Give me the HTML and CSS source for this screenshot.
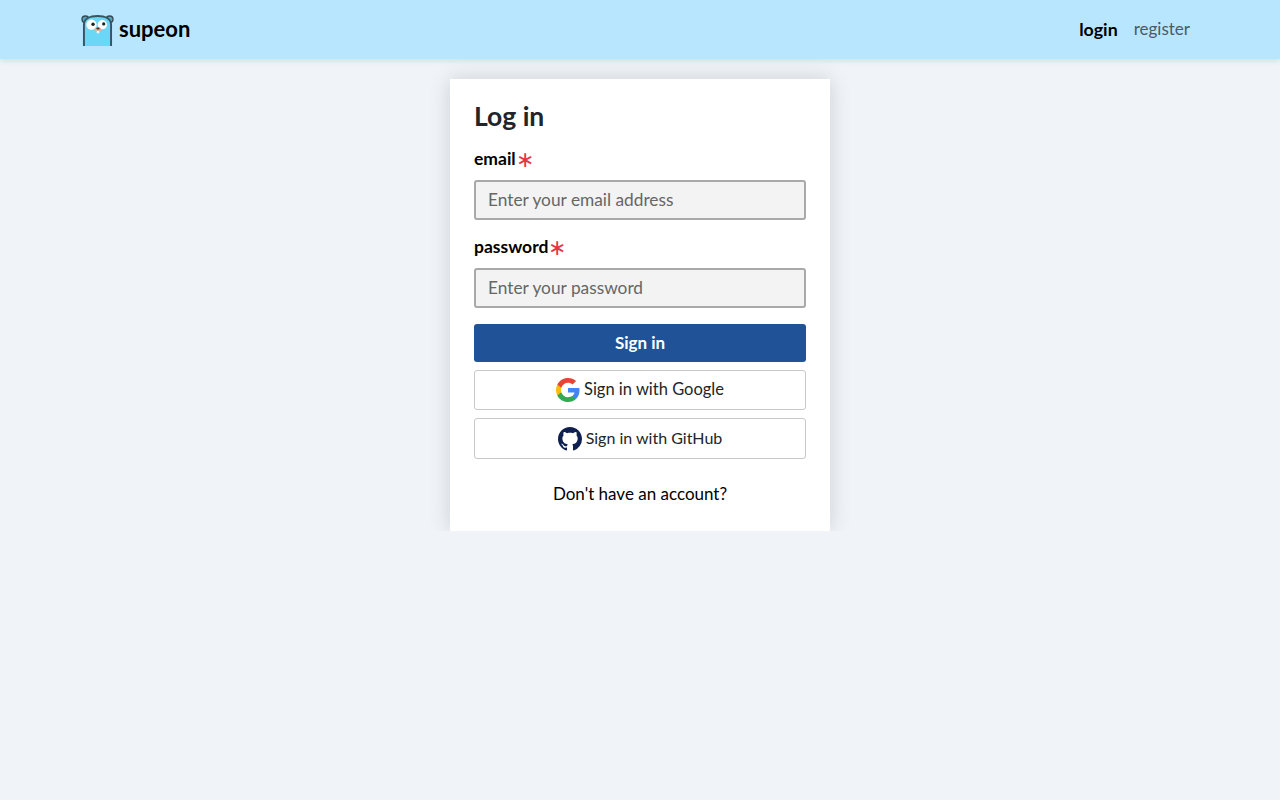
FILE: index.html
```html
<!DOCTYPE html>
<html lang="en">
<head>
    <meta charset="UTF-8">
    <title>Log in - supeon</title>
    <link rel="stylesheet" href="styles.css">
</head>
<body>
    <!-- Top navigation -->
    <header class="navbar">
        <a class="brand" href="#">
            <svg class="brand_logo" width="33" height="31" viewBox="0 0 34 32">
                <circle cx="4.500" cy="4.500" r="3.500" fill="#4fa9c4" stroke="#37474f" stroke-width="1.400"/>
                <circle cx="29.500" cy="4.500" r="3.500" fill="#4fa9c4" stroke="#37474f" stroke-width="1.400"/>
                <path d="M3 32V10C3 4 9 1 17 1s14 3 14 9v22" fill="#6ad7f7" stroke="#37545f" stroke-width="2"/>
                <circle cx="10.800" cy="10" r="5.300" fill="#fff"/>
                <circle cx="22" cy="10" r="4.800" fill="#fff"/>
                <circle cx="12.400" cy="9.500" r="1.800" fill="#222"/>
                <circle cx="23.400" cy="9.200" r="1.700" fill="#222"/>
                <ellipse cx="17.500" cy="15" rx="3.600" ry="2.300" fill="#d9b8a0"/>
                <ellipse cx="17.500" cy="13.900" rx="1.700" ry="1.100" fill="#3a2a28"/>
                <rect x="16.200" y="16.500" width="2.600" height="2.400" fill="#f4f4f4"/>
            </svg>
            <span>supeon</span>
        </a>
        <nav class="nav_links">
            <a class="nav_active" href="#">login</a>
            <a href="#">register</a>
        </nav>
    </header>

    <!-- Login form -->
    <main class="card">
        <h1>Log in</h1>
        <form class="login_form">
            <label for="email">email<span class="required">∗</span></label>
            <input type="text" id="email" placeholder="Enter your email address">
            <label for="password">password<span class="required">∗</span></label>
            <input type="password" id="password" placeholder="Enter your password">
            <button type="submit" class="btn_primary">Sign in</button>
            <button type="button" class="btn_social">
                <svg width="24" height="24" viewBox="0 0 24 24">
                    <path fill="#4285f4" d="M23.500 12.300c0-.9-.1-1.700-.2-2.400H12v4.500h6.500c-.3 1.500-1.100 2.800-2.400 3.600v3h3.900c2.300-2.100 3.500-5.200 3.500-8.700z"/>
                    <path fill="#34a853" d="M12 24c3.200 0 6-1.100 8-2.900l-3.900-3c-1.100.7-2.500 1.200-4.100 1.200-3.100 0-5.800-2.100-6.700-5H1.300v3.100C3.300 21.300 7.300 24 12 24z"/>
                    <path fill="#fbbc05" d="M5.300 14.300c-.5-1.500-.5-3.100 0-4.600V6.600h-4c-1.700 3.400-1.700 7.400 0 10.800z"/>
                    <path fill="#ea4335" d="M12 4.700c1.800 0 3.400.6 4.600 1.800l3.500-3.500C18 1.100 15.200 0 12 0 7.300 0 3.300 2.700 1.300 6.600l4 3.100c.9-2.900 3.600-5 6.700-5z"/>
                </svg>
                <span class="btn_label">Sign in with Google</span>
            </button>
            <button type="button" class="btn_social btn_github">
                <svg width="24" height="24" viewBox="0 0 16 16">
                    <path fill="#0f2050" d="M8 0C3.580 0 0 3.580 0 8c0 3.540 2.290 6.530 5.470 7.590.4.070.55-.17.55-.38 0-.19-.01-.82-.01-1.490-2.010.37-2.530-.49-2.690-.94-.09-.23-.48-.94-.82-1.130-.28-.15-.68-.52-.01-.53.63-.01 1.080.58 1.230.82.72 1.210 1.870.87 2.330.66.070-.52.28-.87.51-1.070-1.780-.2-3.640-.89-3.640-3.950 0-.87.310-1.590.820-2.150-.08-.2-.36-1.020.08-2.120 0 0 .67-.21 2.200.82.640-.18 1.320-.27 2-.27s1.360.09 2 .27c1.530-1.040 2.200-.82 2.200-.82.440 1.100.160 1.920.080 2.120.510.560.820 1.270.820 2.150 0 3.070-1.870 3.750-3.650 3.950.290.250.540.730.540 1.480 0 1.070-.01 1.930-.01 2.200 0 .21.150.46.550.38A8.010 8.010 0 0 0 16 8c0-4.420-3.580-8-8-8z"/>
                </svg>
                <span class="btn_label">Sign in with GitHub</span>
            </button>
        </form>
        <p class="signup_note">Don't have an account?</p>
    </main>
</body>
</html>
```

FILE: styles.css
```css
/* General styles for body */
body {
    font-family: 'Lato', 'Open Sans', sans-serif;
    margin: 0;
    background: #f0f4f9;
    color: #000;
    min-height: 100vh;
}

a {
    text-decoration: none;
    color: inherit;
}

.navbar {
    height: 59px;
    box-sizing: border-box;
    padding: 0 90px 2px 81px;
    background: #b9e6ff;
    box-shadow: 0 2px 6px rgba(0, 0, 0, 0.1);
    display: flex;
    justify-content: space-between;
    align-items: center;
}

.brand {
    display: flex;
    align-items: center;
    gap: 5px;
    font-size: 22px;
    font-weight: 700;
}

.brand_logo {
    margin-top: 4px;
    flex-shrink: 0;
}

.nav_links {
    display: flex;
    align-items: center;
    gap: 16px;
    font-size: 17px;
    color: #4a5a66;
    font-weight: 400;
}

.nav_active {
    color: #000;
    font-size: 17.800px;
    font-weight: 700;
}

.card {
    width: 380px;
    box-sizing: border-box;
    height: 452px;
    margin: 20px auto 0;
    padding: 24px;
    background: #fff;
    box-shadow: 0 0 20px rgba(0, 0, 0, 0.15);
    clip-path: inset(-40px -40px 0 -40px);
}

h1 {
    margin: -1px 0 0;
    font-size: 26.500px;
    line-height: 28px;
    font-weight: 700;
    color: #212529;
}

.login_form {
    display: flex;
    flex-direction: column;
    margin-top: 18px;
}

.login_form label {
    font-size: 17.500px;
    line-height: 22px;
    font-weight: 700;
    margin-bottom: 10px;
    display: flex;
    align-items: center;
}

.required {
    color: #e8334a;
    font-size: 22px;
    font-weight: 400;
    line-height: 22px;
}

.login_form input {
    height: 40px;
    box-sizing: border-box;
    margin-bottom: 16px;
    padding: 0 12px 2px;
    border: 2px solid #a9a9a9;
    border-radius: 3px;
    background: #f3f3f3;
    font-family: inherit;
    font-size: 17.300px;
    outline: none;
}

.login_form input::placeholder {
    color: #666;
    opacity: 1;
}

.login_form button {
    font-family: inherit;
    font-size: 17px;
    cursor: pointer;
    border-radius: 3px;
}

.btn_primary {
    height: 38px;
    margin-bottom: 8px;
    padding-bottom: 3px;
    border: none;
    background: #1f5296;
    color: #fff;
    font-weight: 700;
}

.login_form .btn_social {
    height: 40px;
    margin-bottom: 8px;
    border: 1px solid #c8c8c8;
    background: #fff;
    color: #212529;
    display: flex;
    justify-content: center;
    align-items: center;
    gap: 4px;
    font-size: 16.500px;
    font-weight: 400;
}

.login_form .btn_github {
    height: 41px;
    font-size: 16px;
}

.btn_label {
    margin-bottom: 2px;
}

.signup_note {
    margin: 15px 0 0;
    text-align: center;
    font-size: 17px;
    line-height: 24px;
}
```
